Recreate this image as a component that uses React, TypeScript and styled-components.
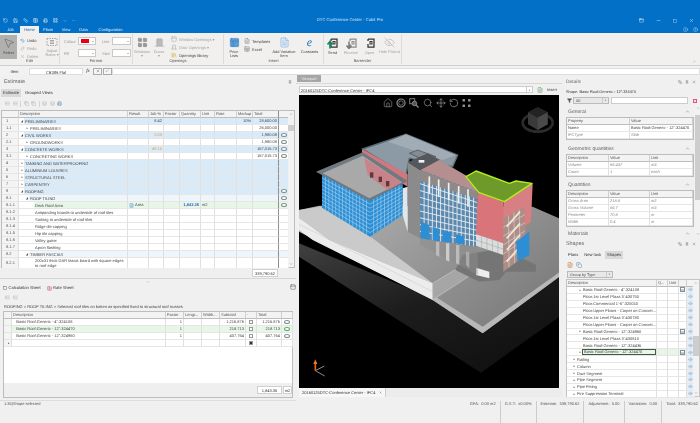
import React from 'react';
import styled, { createGlobalStyle } from 'styled-components';
import {
  Undo2, Redo2, X, Check, Home, Search, Move, RotateCcw, Pin, Minus, Square, Info, HelpCircle, Filter, Eye, EyeOff,
  Save, Printer, Ruler, Table, ChevronUp, ChevronDown, LayoutGrid, FileText, Sheet, PanelTop, MousePointer2,
  DoorClosed, PanelsTopLeft, Library, Copy, Layers, ListTree, AppWindow, Crop
} from 'lucide-react';

const GlobalStyle = createGlobalStyle`
  html, body { margin: 0; padding: 0; background: #f0f0f0; }
  body { font-family: "Liberation Sans", "Open Sans", sans-serif; color: #333; overflow: hidden; text-rendering: geometricPrecision; }
  * { box-sizing: border-box; }
`;

const Page = styled.div`
  width: 700px;
  height: 423px;
  overflow: hidden;
  display: flex;
  flex-direction: column;
  background: #f0f0f0;
  filter: blur(0.25px);
`;

/* title bar */
const TitleBar = styled.div`
  height: 33px;
  background: #0170c6;
  color: #e8f2fb;
  padding-top: 15px;
  display: flex;
  flex-direction: column;
  flex: none;
`;
const TitleRow = styled.div`
  height: 11px;
  display: flex;
  align-items: center;
  position: relative;
  padding: 0 3px;
`;
const QuickAccess = styled.div`
  display: flex;
  align-items: center;
  gap: 5px;
  height: 8px;
`;
const AppTitle = styled.div`
  position: absolute;
  left: 0;
  right: 0;
  top: 1px;
  text-align: center;
  font-size: 4.2px;
  line-height: 8px;
  color: #cfe6f8;
`;
const WindowButtons = styled.div`
  margin-left: auto;
  display: flex;
  gap: 12px;
  align-items: center;
  padding-right: 3px;
`;
const TabRow = styled.div`
  height: 7px;
  display: flex;
  align-items: stretch;
  font-size: 4px;
  padding-left: 1px;
  position: relative;
`;
const RibbonTab = styled.div<{ $active?: boolean; $w: number }>`
  width: ${p => p.$w}px;
  text-align: center;
  line-height: 7px;
  color: ${p => (p.$active ? '#1e5f96' : '#dcecf9')};
  background: ${p => (p.$active ? '#f1f0ef' : 'transparent')};
`;
const HelpIcons = styled.div`
  margin-left: auto;
  display: flex;
  gap: 5px;
  align-items: center;
  padding-right: 2px;
  opacity: 0.8;
`;

/* ribbon */
const Ribbon = styled.div`
  height: 33px;
  flex: none;
  display: flex;
  background: #f1f0ef;
  border-bottom: 1px solid #cfcfcf;
  position: relative;
`;
const RibbonGroup = styled.div<{ $w: number }>`
  width: ${p => p.$w}px;
  flex: none;
  display: flex;
  flex-direction: column;
  border-right: 1px solid #dcdcdc;
  margin: 1px 0;
`;
const GroupBody = styled.div`
  flex: 1;
  display: flex;
  align-items: flex-start;
  padding-top: 1px;
  min-height: 0;
`;
const GroupLabel = styled.div`
  height: 7px;
  font-size: 4px;
  line-height: 7px;
  text-align: center;
  color: #555;
`;
const BigButton = styled.div<{ $w: number; $on?: boolean; $dim?: boolean }>`
  width: ${p => p.$w}px;
  flex: none;
  height: 24px;
  display: flex;
  flex-direction: column;
  align-items: center;
  gap: 2px;
  padding-top: 2px;
  font-size: 3.9px;
  line-height: 4.4px;
  text-align: center;
  background: ${p => (p.$on ? '#b0b0ae' : 'transparent')};
  color: ${p => (p.$dim ? '#a0a0a0' : '#444')};
`;
const SmallStack = styled.div<{ $w: number; $ml?: number; $pt?: number }>`
  width: ${p => p.$w}px;
  margin-left: ${p => p.$ml ?? 0}px;
  padding-top: ${p => p.$pt ?? 2}px;
  flex: none;
  display: flex;
  flex-direction: column;
  gap: 2px;
`;
const SmallButton = styled.div<{ $dim?: boolean }>`
  height: 6px;
  display: flex;
  align-items: center;
  gap: 2px;
  font-size: 4px;
  white-space: nowrap;
  color: ${p => (p.$dim ? '#a4a4a4' : '#444')};
`;
const FormatRow = styled.div`
  height: 8px;
  display: flex;
  align-items: center;
  font-size: 4px;
  color: #999;
  margin-bottom: 2px;
`;
const FormatLabel = styled.span<{ $w: number }>`
  width: ${p => p.$w}px;
  flex: none;
`;
const Swatch = styled.div<{ $w?: number }>`
  width: ${p => p.$w ?? 18}px;
  height: 8px;
  background: #fff;
  border: 1px solid #c8c8c8;
  display: flex;
  align-items: center;
  padding: 1px 6px 1px 2px;
  position: relative;
  &::after {
    content: '';
    position: absolute;
    right: 1.5px;
    top: 2.5px;
    border: 1.2px solid transparent;
    border-top-color: #888;
  }
`;
const ColourChip = styled.div`
  width: 8px;
  height: 3.5px;
  background: #e8000f;
`;
const CollapseMark = styled.div`
  position: absolute;
  right: 3px;
  bottom: 1px;
  color: #999;
  display: flex;
`;
const BigE = styled.span`
  font-family: "Liberation Serif", serif;
  font-style: italic;
  font-size: 12px;
  line-height: 11px;
  height: 11px;
  color: #1c72b8;
`;

/* formula bar */
const FormulaBar = styled.div`
  height: 9px;
  flex: none;
  display: flex;
  align-items: center;
  font-size: 4.1px;
  background: #f2f2f2;
  padding-top: 1px;
`;
const ItemLabel = styled.div`
  width: 29px;
  text-align: center;
  flex: none;
`;
const FieldBox = styled.div<{ $w?: number; $center?: boolean }>`
  ${p => (p.$w ? `width:${p.$w}px;flex:none;` : 'flex:1;')}
  height: 7px;
  line-height: 7px;
  background: #fff;
  text-align: ${p => (p.$center ? 'center' : 'left')};
  border: 0.5px solid #ddd;
`;
const FxBox = styled.div`
  width: 10px;
  flex: none;
  text-align: center;
  font-family: "Liberation Serif", serif;
  font-style: italic;
  font-size: 5px;
`;
const MiniButton = styled.div`
  width: 9px;
  height: 7px;
  flex: none;
  display: flex;
  align-items: center;
  justify-content: center;
  border: 0.5px solid #aaa;
  background: #f7f7f7;
  margin-right: 0.5px;
`;

/* main columns */
const Main = styled.div`
  height: 323px;
  flex: none;
  display: grid;
  grid-template-columns: 296px 266px 138px;
`;
const Column = styled.div`
  display: flex;
  flex-direction: column;
  min-width: 0;
  min-height: 0;
`;
const PanelTitle = styled.div<{ $h: number; $size?: number }>`
  height: ${p => p.$h}px;
  flex: none;
  display: flex;
  align-items: center;
  font-size: ${p => p.$size ?? 5.4}px;
  color: #666;
  padding: 0 4px;
`;
const TitleTools = styled.div`
  margin-left: auto;
  display: flex;
  gap: 3px;
  color: #555;
`;
const SubTabs = styled.div<{ $pl?: number }>`
  height: 8px;
  flex: none;
  display: flex;
  font-size: 4.1px;
  padding-left: ${p => p.$pl ?? 1}px;
`;
const SubTab = styled.div<{ $active?: boolean }>`
  padding: 0 2px;
  margin-right: 2px;
  line-height: 8px;
  display: flex;
  align-items: center;
  gap: 1.5px;
  background: ${p => (p.$active ? '#d9d9d9' : 'transparent')};
`;
const ToolRow = styled.div<{ $h: number }>`
  height: ${p => p.$h}px;
  flex: none;
  display: flex;
  align-items: center;
  gap: 2.5px;
  padding-left: 5px;
  color: #a9a9a9;
`;
const ToolSep = styled.div`
  width: 1px;
  height: 6px;
  background: #d4d4d4;
`;
const TableWrap = styled.div<{ $h: number; $mx?: number }>`
  height: ${p => p.$h}px;
  flex: none;
  display: flex;
  margin: 0 ${p => p.$mx ?? 1}px;
  border: 0.5px solid #bdbdbd;
  background: #fff;
`;
const TableBody = styled.div`
  flex: 1;
  min-width: 0;
  display: flex;
  flex-direction: column;
`;
const Row = styled.div<{ $cols: string; $h?: number; $bg?: string }>`
  display: grid;
  grid-template-columns: ${p => p.$cols};
  height: ${p => p.$h ?? 7}px;
  flex: none;
  background: ${p => p.$bg ?? '#fff'};
`;
const Cell = styled.div<{ $right?: boolean; $bg?: string; $color?: string; $bold?: boolean; $heavy?: boolean; $italic?: boolean }>`
  font-size: 4px;
  line-height: 6.5px;
  padding: 0 1px;
  display: flex;
  align-items: center;
  justify-content: ${p => (p.$right ? 'flex-end' : 'flex-start')};
  white-space: nowrap;
  overflow: hidden;
  min-width: 0;
  color: ${p => p.$color ?? '#444'};
  font-weight: ${p => (p.$bold ? 700 : 400)};
  font-style: ${p => (p.$italic ? 'italic' : 'normal')};
  background: ${p => p.$bg ?? 'transparent'};
  border-right: ${p => (p.$heavy ? '1px solid #8e8e8e' : '0.5px solid #e0e0e0')};
  border-bottom: 0.5px solid #e6e6e6;
`;
const HeadCell = styled(Cell)`
  background: #f3f3f3;
  color: #555;
  border-right: ${p => (p.$heavy ? '1px solid #8e8e8e' : '0.5px solid #cfcfcf')};
  border-bottom: 0.5px solid #bdbdbd;
`;
const GutterCell = styled(Cell)`
  background: #f4f4f4;
  color: #555;
  justify-content: flex-start;
  padding-left: 4px;
`;
const DescCell = styled(Cell)`
  padding: 0;
  white-space: normal;
`;
const DescPad = styled.div<{ $w: number }>`
  width: ${p => p.$w}px;
  flex: none;
  height: 100%;
  display: flex;
  align-items: center;
  justify-content: flex-end;
  background: #fff;
  padding-right: 1px;
`;
const DescText = styled.div<{ $bg?: string }>`
  flex: 1;
  height: 100%;
  padding-left: 1px;
  display: flex;
  align-items: center;
  white-space: pre;
  line-height: 5px;
  min-width: 0;
  background: ${p => p.$bg ?? 'transparent'};
`;
const Caret = styled.span`
  font-family: "DejaVu Sans", sans-serif;
  font-size: 3px;
  color: #555;
`;
const Oval = styled.div<{ $green?: boolean }>`
  width: 6px;
  height: 4px;
  border-radius: 50%;
  border: 0.5px solid ${p => (p.$green ? '#5aaa68' : '#7f9090')};
  background: #fff;
  margin: 0 auto;
`;
const Rail = styled.div<{ $w?: number }>`
  width: ${p => p.$w ?? 6}px;
  flex: none;
  background: #f2f2f2;
  display: flex;
  flex-direction: column;
  align-items: center;
  justify-content: space-between;
  color: #777;
  position: relative;
  padding: 1px 0;
`;
const Thumb = styled.div<{ $top: number; $h: number }>`
  position: absolute;
  left: 0;
  right: 0;
  top: ${p => p.$top}px;
  height: ${p => p.$h}px;
  background: #cdcdcd;
`;
const TotalRow = styled.div<{ $h: number }>`
  height: ${p => p.$h}px;
  flex: none;
  display: flex;
  align-items: center;
  background: #efefef;
  font-size: 4px;
`;
const TotalBox = styled.div<{ $w: number; $ml?: number }>`
  width: ${p => p.$w}px;
  height: 8px;
  line-height: 8px;
  flex: none;
  margin-left: ${p => p.$ml ?? 0}px;
  background: #fff;
  border: 0.5px solid #d0d0d0;
  text-align: center;
`;
const Splitter = styled.div`
  height: 6px;
  flex: none;
  display: flex;
  align-items: center;
  justify-content: center;
  border-top: 1px solid #d6d6d6;
  color: #888;
`;
const Crumb = styled.div`
  height: 8px;
  flex: none;
  padding-left: 4px;
  font-size: 4px;
  line-height: 8px;
  white-space: nowrap;
  overflow: hidden;
  color: #444;
`;
const CheckBoxMark = styled.div<{ $filled?: boolean }>`
  width: 4px;
  height: 4px;
  margin: 0 auto;
  border: 0.5px solid #999;
  background: ${p => (p.$filled ? 'radial-gradient(#333 60%, #fff 62%)' : '#fff')};
`;
const EmptyFill = styled.div`
  flex: 1;
  background: #fff;
`;
const BottomEdge = styled.div`
  height: 1px;
  flex: none;
  background: #ddd;
  margin-top: 2px;
`;

/* viewport */
const ViewTab = styled.div`
  width: 24px;
  height: 7px;
  flex: none;
  margin-left: 1px;
  background: #a6a6a6;
  color: #eee;
  font-size: 3.9px;
  line-height: 7px;
  text-align: center;
`;
const AddressRow = styled.div`
  height: 12px;
  flex: none;
  margin-top: 1px;
  display: flex;
  align-items: center;
  padding: 0 3px;
  border-top: 1px solid #d8d8d8;
  font-size: 4px;
`;
const AddressField = styled.div`
  flex: 1;
  height: 7px;
  line-height: 7px;
  padding-left: 1px;
  background: #fff;
  border: 0.5px solid #ccc;
  display: flex;
  justify-content: space-between;
`;
const DropMark = styled.span`
  width: 6px;
  border-left: 0.5px solid #ccc;
  font-size: 2.6px;
  text-align: center;
  color: #666;
`;
const InsertButton = styled.div`
  width: 26px;
  flex: none;
  display: flex;
  align-items: center;
  justify-content: flex-end;
  gap: 4px;
  padding-right: 2px;
  color: #444;
`;
const Canvas = styled.div`
  width: 260px;
  height: 293px;
  flex: none;
  margin-left: 3px;
  background: #000;
  position: relative;
  overflow: hidden;
`;
const Scene = styled.svg`
  display: block;
  width: 100%;
  height: 100%;
`;
const NavIcons = styled.div`
  position: absolute;
  left: 84px;
  top: 3px;
  display: flex;
  gap: 3.2px;
  color: #8e8e8e;
`;
const FileTabRow = styled.div`
  height: 9px;
  flex: none;
  margin-left: 3px;
  display: flex;
  font-size: 4px;
  background: #ececec;
`;
const FileTab = styled.div`
  width: 87px;
  background: #f7f7f7;
  border-right: 0.5px solid #ccc;
  line-height: 8px;
  padding-left: 3px;
  display: flex;
  align-items: center;
  gap: 4px;
`;

/* right side */
const ShapeLine = styled.div`
  height: 7px;
  flex: none;
  font-size: 3.9px;
  line-height: 6px;
  padding-left: 4px;
  white-space: nowrap;
`;
const FilterRow = styled.div`
  height: 9px;
  flex: none;
  display: flex;
  align-items: center;
  padding-left: 5px;
  gap: 1px;
  color: #555;
`;
const ComboBox = styled.div<{ $w: number }>`
  width: ${p => p.$w}px;
  flex: none;
  height: 7px;
  line-height: 6.5px;
  padding-left: 2px;
  font-size: 3.9px;
  background: #e8e8e8;
  border: 0.5px solid #bbb;
  display: flex;
  justify-content: space-between;
`;
const WhiteBox = styled.div`
  width: 77px;
  flex: none;
  height: 7px;
  background: #fff;
  border: 0.5px solid #ccc;
  margin-left: 1px;
`;
const PinkBox = styled.div`
  width: 4px;
  height: 4px;
  margin-left: 4px;
  border: 0.7px solid #e0567b;
  background: #f9dbe3;
`;
const DetailsBody = styled.div`
  height: 132px;
  flex: none;
  overflow: hidden;
  display: flex;
`;
const DetailsScroll = styled.div`
  flex: 1;
  min-width: 0;
  padding: 0 1px 0 4px;
`;
const SectionHead = styled.div<{ $mt?: number }>`
  height: 9px;
  margin-top: ${p => p.$mt ?? 0}px;
  display: flex;
  align-items: center;
  justify-content: space-between;
  font-size: 5px;
  color: #666;
  padding: 0 4px 0 2px;
`;
const DetailTable = styled.div`
  border: 0.5px solid #bcbcbc;
  margin: 1px 0;
`;
const ShapesTree = styled.div`
  flex: none;
  height: 118px;
  margin-left: 4px;
  display: flex;
  border: 0.5px solid #c4c4c4;
  background: #fff;
`;
const Blue = styled.span`
  color: #6ea6d8;
  display: flex;
  margin: 0 auto;
`;
const Ellipsis = styled.div`
  width: 7px;
  height: 5px;
  font-size: 3px;
  line-height: 4px;
  text-align: center;
  border: 0.5px solid #7e8fa0;
  background: #fff;
  color: #333;
`;
const Selected = styled.div`
  flex: 1;
  height: 100%;
  display: flex;
  align-items: center;
  border: 0.8px solid #3f5a44;
  padding-left: 1px;
`;

/* status */
const StatusBar = styled.div`
  flex: 1;
  display: flex;
  justify-content: space-between;
  padding: 3px 2px 0 4px;
  font-size: 4px;
  line-height: 6px;
  color: #555;
`;
const StatusRight = styled.div`
  display: flex;
  gap: 4px;
`;
const StatusItem = styled.div`
  padding-right: 4px;
  border-right: 0.5px solid #ccc;
  white-space: pre;
  &:last-child { border-right: 0; padding-right: 0; }
`;

const Bartender = ({ arrow, dim, colour }: { arrow?: 'up' | 'down'; dim?: boolean; colour?: string }) => (
  <svg width="13" height="12" viewBox="0 0 26 24" fill="none">
    <path d="M10 4 H22 V20 H10 V14 M10 4 V8" stroke={dim ? '#8a8a8a' : '#333'} strokeWidth="2.5" />
    <rect x="14" y="9" width="4" height="5" stroke={dim ? '#8a8a8a' : '#333'} strokeWidth="2" />
    {arrow === 'up' && <path d="M8 23 V11 M3 15 L8 9 L13 15" stroke={colour} strokeWidth="3.5" />}
    {arrow === 'down' && <path d="M8 9 V21 M3 17 L8 23 L13 17" stroke={colour} strokeWidth="3" />}
  </svg>
);

const AdjustIcon = () => (
  <svg width="12" height="10" viewBox="0 0 24 20" fill="none" stroke="#888" strokeWidth="1.4">
    <rect x="2" y="3" width="20" height="14" strokeDasharray="3 2" />
    <path d="M8 7 h8 M8 10 h8 M8 13 h8" />
  </svg>
);

const OrbitIcon = () => (
  <svg width="10" height="10" viewBox="0 0 20 20" fill="none" stroke="currentColor">
    <circle cx="10" cy="10" r="8" strokeWidth="2.4" />
    <circle cx="10" cy="10" r="4.5" strokeWidth="1.4" />
  </svg>
);

const ZoomWindowIcon = () => (
  <svg width="10" height="10" viewBox="0 0 20 20" fill="none" stroke="currentColor" strokeWidth="1.8">
    <rect x="1.5" y="1.5" width="10" height="10" />
    <circle cx="11" cy="11" r="4.5" fill="#555" />
    <path d="M14.5 14.5 L19 19" strokeWidth="2.4" />
  </svg>
);

const FourDots = () => (
  <svg width="9" height="10" viewBox="0 0 18 20" fill="currentColor">
    <rect x="1" y="2" width="5" height="5" rx="1" />
    <rect x="12" y="2" width="5" height="5" rx="1" />
    <rect x="1" y="13" width="5" height="5" rx="1" />
    <rect x="12" y="13" width="5" height="5" rx="1" />
  </svg>
);

const EST_COLS = '17px 109px 21px 15px 16px 21px 14px 22px 16px 26px 10px';
const TINT = '#d9ebf9';
const TINT2 = '#eef6fc';
const GREEN = '#e8f6e8';

interface EstRow {
  no: string;
  level: number;
  caret?: string;
  desc: string;
  job?: string;
  jobHot?: boolean;
  markup?: string;
  total?: string;
  oval?: boolean;
  result?: boolean;
  qty?: string;
  unit?: string;
  tint?: string;
  h?: number;
}

const estimateRows: EstRow[] = [
  { no: '1', level: 0, caret: '◢', desc: 'PRELIMINARIES', job: '8.42', markup: '10%', total: '28,600.00', tint: TINT },
  { no: '1.1', level: 1, caret: '▸', desc: 'PRELIMINARIES', total: '26,000.00' },
  { no: '2', level: 0, caret: '◢', desc: 'CIVIL WORKS', job: '0.58', jobHot: true, total: '1,980.08', oval: true, tint: TINT },
  { no: '2.1', level: 1, caret: '▸', desc: 'GROUNDWORKS', total: '1,980.08', oval: true },
  { no: '3', level: 0, caret: '◢', desc: 'CONCRETE WORKS', job: '49.15', jobHot: true, total: '167,015.73', oval: true, tint: TINT },
  { no: '3.1', level: 1, caret: '▸', desc: 'CONCRETING WORKS', total: '167,015.73', oval: true },
  { no: '4', level: 0, caret: '▸', desc: 'TANKING AND WATERPROOFING', tint: TINT },
  { no: '5', level: 0, caret: '▸', desc: 'ALUMINIUM LOUVRES', tint: TINT },
  { no: '6', level: 0, caret: '▸', desc: 'STRUCTURAL STEEL', tint: TINT },
  { no: '7', level: 0, caret: '▸', desc: 'CARPENTRY', tint: TINT },
  { no: '8', level: 0, caret: '◢', desc: 'ROOFING', oval: true, tint: TINT },
  { no: '8.1', level: 1, caret: '◢', desc: 'ROOF TILING', oval: true, tint: TINT2 },
  { no: '8.1.1', level: 2, desc: 'Deck Roof Area', result: true, qty: '1,843.35', unit: 'm2', oval: true, tint: GREEN },
  { no: '8.1.2', level: 2, desc: 'Antiponding boards to underside of roof tiles' },
  { no: '8.1.3', level: 2, desc: 'Sarking to underside of roof tiles' },
  { no: '8.1.4', level: 2, desc: 'Ridge tile capping' },
  { no: '8.1.5', level: 2, desc: 'Hip tile capping' },
  { no: '8.1.6', level: 2, desc: 'Valley gutter' },
  { no: '8.1.7', level: 2, desc: 'Apron flashing' },
  { no: '8.2', level: 1, caret: '◢', desc: 'TIMBER FASCIAS', tint: TINT2 },
  { no: '8.2.1', level: 2, desc: '200x31 thick DAR fascia board with square edges\nto roof edge', h: 11 }
];

const EST_PAD = [5, 10, 15];

const CALC_COLS = '8px 154px 18px 18px 18px 26px 11px 25px 11px';
const calcRows = [
  { desc: 'Basic Roof:Generic - 4":324108', sub: '1,216.876', total: '1,216.876' },
  { desc: 'Basic Roof:Generic - 12":324470', sub: '218.713', total: '218.713', tint: GREEN },
  { desc: 'Basic Roof:Generic - 12":324960', sub: '407.764', total: '407.764' }
];

const TREE_COLS = '90px 11px 11px 8px 8px';
const TREE_ROW = 6.93;
const TREE_PAD = [0, 9, 15, 15];
const treeRows = [
  { depth: 2, caret: true, text: 'Basic Roof:Generic - 4":324108', more: true },
  { depth: 3, text: "Floor:1st Level Plaza 3':430750" },
  { depth: 3, text: 'Floor:Commercial 1\'-6":325010' },
  { depth: 3, text: 'Floor:Upper Floors - Carpet on Concret...' },
  { depth: 3, text: "Floor:1st Level Plaza 3':430780" },
  { depth: 3, text: 'Floor:Upper Floors - Carpet on Concret...' },
  { depth: 2, caret: true, text: 'Basic Roof:Generic - 12":324960', more: true },
  { depth: 3, text: "Floor:1st Level Plaza 3':430810" },
  { depth: 3, text: 'Basic Roof:Generic - 12":324436' },
  { depth: 2, caret: true, text: 'Basic Roof:Generic - 12":324470', more: true, sel: true },
  { depth: 1, caret: true, text: 'Railing' },
  { depth: 1, caret: true, text: 'Column' },
  { depth: 1, caret: true, text: 'Duct Segment' },
  { depth: 1, caret: true, text: 'Pipe Segment' },
  { depth: 1, caret: true, text: 'Pipe Fitting' },
  { depth: 1, caret: true, text: 'Fire Suppression Terminal' }
];

// grid lines across a quad, corners clockwise from top-left
type P = [number, number];
const mix = (a: P, b: P, t: number): P => [a[0] + (b[0] - a[0]) * t, a[1] + (b[1] - a[1]) * t];
const pts = (...list: P[]) => list.map(p => p.join(',')).join(' ');

const Face = ({ q, nx, ny, fill, line, w = 1 }: { q: [P, P, P, P]; nx: number; ny: number; fill: string; line: string; w?: number }) => {
  const [a, b, c, d] = q;
  const lines: [P, P][] = [];
  for (let i = 1; i < nx; i++) lines.push([mix(a, b, i / nx), mix(d, c, i / nx)]);
  for (let i = 1; i < ny; i++) lines.push([mix(a, d, i / ny), mix(b, c, i / ny)]);
  return (
    <g>
      <polygon points={pts(a, b, c, d)} fill={fill} />
      {lines.map((l, i) => (
        <line key={i} x1={l[0][0]} y1={l[0][1]} x2={l[1][0]} y2={l[1][1]} stroke={line} strokeWidth={w} />
      ))}
    </g>
  );
};

const Building = () => (
  <Scene viewBox="9 60 780 879">
    <defs>
      <linearGradient id="base" x1="0" y1="0" x2="0.8" y2="1">
        <stop offset="0" stopColor="#404040" />
        <stop offset="0.5" stopColor="#1d1d1d" />
        <stop offset="1" stopColor="#101010" />
      </linearGradient>
      <linearGradient id="plane" x1="0" y1="0" x2="1" y2="0.6">
        <stop offset="0" stopColor="#b4b4b4" />
        <stop offset="1" stopColor="#7e7e7e" />
      </linearGradient>
    </defs>
    {/* ground slab */}
    <polygon points="9,505 9,545 555,893 790,725 790,600 410,670" fill="url(#base)" />
    <polygon points="9,405 70,392 710,395 790,430 790,605 560,775 410,675 9,470" fill="url(#plane)" />
    <polygon points="410,675 560,775 790,605 790,592 560,755 410,660" fill="#b8b8b8" />
    <polygon points="9,405 75,395 230,490 410,625 100,495 25,440 9,430" fill="#cacaca" />
    <polygon points="9,430 25,440 100,495 410,625 410,675 50,495 9,465" fill="#ececec" />
    <line x1="9" y1="448" x2="410" y2="650" stroke="#c8c8c8" strokeWidth="1.5" />
    <polygon points="410,625 410,675 540,590 475,585" fill="#a6a6a6" stroke="#d4d4d4" strokeWidth="1.5" />
    <polygon points="478,585 550,620 610,615 630,590 720,590 720,570 620,520 500,540" fill="#757575" />
    <polygon points="540,578 580,590 580,610 540,600" fill="#eee" />
    {/* rear block */}
    <polygon points="200,222 330,178 485,240 470,275 340,250 330,300" fill="#8c9aa5" stroke="#5b6a75" strokeWidth="4" />
    <polygon points="275,200 330,178 480,240 440,255" fill="#a1acb6" />
    <polygon points="198,222 335,298 335,335 198,255" fill="#d0787e" />
    <polygon points="340,235 365,225 420,245 400,262" fill="#848c92" stroke="#444" strokeWidth="2" />
    {/* left wing */}
    <Face q={[[78, 298], [222, 375], [222, 485], [78, 398]]} nx={14} ny={9} fill="#2d8ed4" line="#b4dcf5" w={1.6} />
    <Face q={[[222, 375], [320, 325], [320, 420], [222, 485]]} nx={9} ny={9} fill="#2d8ed4" line="#b4dcf5" w={1.6} />
    <polygon points="60,290 200,232 335,318 220,378" fill="#6f7980" />
    <polygon points="80,295 200,242 318,322 220,370" fill="#a9a9a9" />
    <polygon points="205,250 318,322 275,345 215,300" fill="#c88288" />
    <rect x="222" y="292" width="10" height="16" fill="#5a3a40" />
    <rect x="248" y="305" width="10" height="16" fill="#5a3a40" />
    <rect x="270" y="318" width="10" height="16" fill="#5a3a40" />
    {/* core */}
    <polygon points="335,262 395,235 432,255 372,285" fill="#54585c" />
    <polygon points="335,262 372,285 372,490 335,470" fill="#8b8b8b" />
    <polygon points="320,340 335,335 335,470 320,420" fill="#dfe6ec" />
    <polygon points="368,255 385,255 385,263 368,263" fill="#f2f2f2" />
    <polygon points="430,255 545,322 545,352 372,285" fill="#b58e90" />
    {/* main facade */}
    <Face q={[[372, 285], [545, 350], [545, 516], [372, 490]]} nx={14} ny={10} fill="#5b88ad" line="#eef0f2" w={2.6} />
    <polygon points="372,285 545,350 545,372 372,318" fill="#8f8a88" />
    <polygon points="375,440 400,450 400,495 375,490" fill="#2d8ed4" />
    <polygon points="410,455 430,462 430,500 410,496" fill="#2d8ed4" />
    <polygon points="440,466 465,472 465,503 440,500" fill="#2d8ed4" />
    <polygon points="480,478 505,485 505,508 480,505" fill="#2d8ed4" />
    {[400, 428, 458, 488, 516].map(x => (
      <line key={x} x1={x} y1={295 + (x - 372) * 0.33} x2={x} y2={345 + (x - 372) * 0.35} stroke="#f1f1f1" strokeWidth="5" />
    ))}
    <polygon points="372,490 545,516 545,600 480,565 372,510" fill="#8b8b8b" opacity="0.5" />
    <polygon points="420,500 430,500 430,545 420,540" fill="#bbb" />
    <polygon points="450,505 460,505 460,560 450,555" fill="#ccc" />
    <polygon points="480,510 490,510 490,570 480,565" fill="#bbb" />
    <polygon points="510,530 520,530 520,580 510,570" fill="#aaa" />
    {/* right block */}
    <polygon points="545,350 622,380 622,505 540,478" fill="#d8747a" />
    <Face q={[[540, 478], [622, 505], [622, 540], [540, 512]]} nx={5} ny={2} fill="#dcdcdc" line="#788" />
    <polygon points="622,380 710,325 705,440 622,500" fill="#d77f82" />
    <Face q={[[622, 430], [685, 395], [690, 540], [622, 590]]} nx={4} ny={6} fill="#ad8d86" line="#eee" w={1.4} />
    {[0, 1, 2, 3].map(i => (
      <path key={i} d={`M632 ${455 + i * 35} L672 ${410 + i * 35}`} stroke="#f2e8d8" strokeWidth="5" />
    ))}
    <polygon points="660,500 700,470 700,540 665,560" fill="#2d8ed4" />
    <polygon points="510,305 540,288 640,325 660,318 708,325 625,380 548,352" fill="#6e9a2a" stroke="#b4ee1e" strokeWidth="4" strokeLinejoin="round" />
    {/* viewcube */}
    <ellipse cx="725" cy="143" rx="45" ry="27" fill="none" stroke="#2c2c2c" strokeWidth="8" />
    <polygon points="725,97 755,112 755,148 725,165 696,148 696,112" fill="#3a3a3a" />
    <polygon points="725,97 755,112 725,128 696,112" fill="#232323" />
    <polygon points="725,128 755,112 755,148 725,165" fill="#4a4a4a" />
    {/* axes */}
    <path d="M58 392 L85 378 M58 392 L86 408" stroke="#8c8c8c" strokeWidth="3" transform="translate(0 495)" />
    <path d="M58 392 V370" stroke="#f0620f" strokeWidth="5" transform="translate(0 495)" />
    <polygon points="52,372 64,372 58,358" fill="#ef7a2a" transform="translate(0 495)" />
  </Scene>
);

const App: React.FC = () => (
  <Page>
    <GlobalStyle />
    <TitleBar>
      <TitleRow>
        <QuickAccess>
          <RotateCcw size={5} />
          <Save size={5} />
          <Ruler size={5} />
          <Table size={5} />
          <Printer size={5} />
          <LayoutGrid size={5} />
          <ChevronDown size={4} />
          <Minus size={3} />
        </QuickAccess>
        <AppTitle>DTC Conference Center - Cubit Pro</AppTitle>
        <WindowButtons>
          <AppWindow size={5} />
          <Minus size={5} />
          <Square size={4} />
          <X size={5} />
        </WindowButtons>
      </TitleRow>
      <TabRow>
        <RibbonTab $w={19}>Job</RibbonTab>
        <RibbonTab $w={19} $active>Home</RibbonTab>
        <RibbonTab $w={18}>Plans</RibbonTab>
        <RibbonTab $w={18}>View</RibbonTab>
        <RibbonTab $w={17}>Data</RibbonTab>
        <RibbonTab $w={37}>Configuration</RibbonTab>
        <HelpIcons>
          <Info size={5} />
          <HelpCircle size={5} />
        </HelpIcons>
      </TabRow>
    </TitleBar>

    <Ribbon>
      <RibbonGroup $w={60}>
        <GroupBody>
          <BigButton $w={17} $on>
            <MousePointer2 size={12} strokeWidth={1} color="#555" />
            Select
          </BigButton>
          <SmallStack $w={24} $ml={3}>
            <SmallButton><Undo2 size={5} color="#3c78b4" />Undo</SmallButton>
            <SmallButton $dim><Redo2 size={5} />Redo</SmallButton>
            <SmallButton $dim><X size={5} />Delete</SmallButton>
          </SmallStack>
          <BigButton $w={16} $dim>
            <AdjustIcon />
            Adjust<br />Rates ▾
          </BigButton>
        </GroupBody>
        <GroupLabel>Edit</GroupLabel>
      </RibbonGroup>
      <RibbonGroup $w={73}>
        <GroupBody>
          <SmallStack $w={38} $ml={4}>
            <FormatRow>
              <FormatLabel $w={14}>Colour</FormatLabel>
              <Swatch><ColourChip /></Swatch>
            </FormatRow>
            <FormatRow>
              <FormatLabel $w={14}>Fill</FormatLabel>
              <Swatch />
            </FormatRow>
          </SmallStack>
          <SmallStack $w={30}>
            <FormatRow>
              <FormatLabel $w={10}>Line</FormatLabel>
              <Swatch $w={19} />
            </FormatRow>
            <FormatRow>
              <FormatLabel $w={10}>Size</FormatLabel>
              <Swatch $w={19} />
            </FormatRow>
          </SmallStack>
        </GroupBody>
        <GroupLabel>Format</GroupLabel>
      </RibbonGroup>
      <RibbonGroup $w={91}>
        <GroupBody>
          <BigButton $w={18} $dim>
            <LayoutGrid size={11} color="#777" fill="#999" strokeWidth={1} />
            Windows<br />▾
          </BigButton>
          <BigButton $w={16} $dim>
            <DoorClosed size={11} color="#999" fill="#bbb" strokeWidth={1} />
            Doors<br />▾
          </BigButton>
          <SmallStack $w={50} $ml={4} $pt={1}>
            <SmallButton $dim><PanelTop size={6} />Window Openings ▾</SmallButton>
            <SmallButton $dim><DoorClosed size={6} />Door Openings ▾</SmallButton>
            <SmallButton><Library size={6} color="#d9a21f" />Openings library</SmallButton>
          </SmallStack>
        </GroupBody>
        <GroupLabel>Openings</GroupLabel>
      </RibbonGroup>
      <RibbonGroup $w={100}>
        <GroupBody>
          <BigButton $w={20}>
            <PanelsTopLeft size={11} color="#2a75b8" fill="#5a9bd5" strokeWidth={1} />
            Price<br />Lists
          </BigButton>
          <SmallStack $w={27} $pt={3}>
            <SmallButton><FileText size={6} color="#888" />Templates</SmallButton>
            <SmallButton><Sheet size={6} color="#888" />Excel</SmallButton>
          </SmallStack>
          <BigButton $w={26}>
            <FileText size={11} color="#6a9ccf" fill="#dceaf7" strokeWidth={1} />
            Add Variation<br />Item
          </BigButton>
          <BigButton $w={25}>
            <BigE>e</BigE>
            Constants
          </BigButton>
        </GroupBody>
        <GroupLabel>Insert</GroupLabel>
      </RibbonGroup>
      <RibbonGroup $w={78}>
        <GroupBody>
          <BigButton $w={17}>
            <Bartender arrow="up" colour="#108a6c" />
            Send
          </BigButton>
          <BigButton $w={20} $dim>
            <Bartender arrow="down" dim colour="#777" />
            Receive
          </BigButton>
          <BigButton $w={17} $dim>
            <Bartender />
            Open
          </BigButton>
          <BigButton $w={23} $dim>
            <EyeOff size={11} strokeWidth={1} color="#999" />
            Hide Picked
          </BigButton>
        </GroupBody>
        <GroupLabel>Bartender</GroupLabel>
      </RibbonGroup>
      <CollapseMark><ChevronUp size={5} /></CollapseMark>
    </Ribbon>

    <FormulaBar>
      <ItemLabel>Item</ItemLabel>
      <FieldBox $w={54} $center>CB389.Flat</FieldBox>
      <FxBox>fx</FxBox>
      <MiniButton><X size={4} /></MiniButton>
      <MiniButton><Check size={4} /></MiniButton>
      <FieldBox />
    </FormulaBar>

    <Main>
      <Column>
        <PanelTitle $h={14}>
          Estimate
          <TitleTools><Pin size={4} /></TitleTools>
        </PanelTitle>
        <SubTabs>
          <SubTab $active>Estimate</SubTab>
          <SubTab>Grouped Views</SubTab>
        </SubTabs>
        <ToolRow $h={13}>
          <ListTree size={5} />
          <ListTree size={5} />
          <ToolSep />
          <Copy size={5} />
          <Copy size={5} />
          <ToolSep />
          <Layers size={5} />
          <Layers size={5} />
          <Printer size={5} color="#5d7fa6" />
        </ToolRow>
        <TableWrap $h={158}>
          <TableBody>
            <Row $cols={EST_COLS}>
              <HeadCell />
              <HeadCell>Description</HeadCell>
              <HeadCell>Result</HeadCell>
              <HeadCell>Job %</HeadCell>
              <HeadCell>Factor</HeadCell>
              <HeadCell>Quantity</HeadCell>
              <HeadCell>Unit</HeadCell>
              <HeadCell>Rate</HeadCell>
              <HeadCell>Markup</HeadCell>
              <HeadCell $heavy>Total</HeadCell>
              <HeadCell />
            </Row>
            {estimateRows.map(r => (
              <Row key={r.no} $cols={EST_COLS} $h={r.h} $bg="#fff">
                <GutterCell>{r.no}</GutterCell>
                <DescCell>
                  <DescPad $w={EST_PAD[r.level]}>{r.caret && <Caret>{r.caret}</Caret>}</DescPad>
                  <DescText $bg={r.tint}>{r.desc}</DescText>
                </DescCell>
                <Cell $bg={r.tint}>
                  {r.result && <FileText size={5} color="#4f94cf" />}
                  {r.result && '\u00a0Area'}
                </Cell>
                <Cell $bg={r.tint} $right $color={r.jobHot ? '#e8a04a' : undefined}>{r.job}</Cell>
                <Cell $bg={r.tint} />
                <Cell $bg={r.tint} $right $color="#2a5fc0" $bold>{r.qty}</Cell>
                <Cell $bg={r.tint}>{r.unit}</Cell>
                <Cell $bg={r.tint} />
                <Cell $bg={r.tint} $right>{r.markup}</Cell>
                <Cell $bg={r.tint} $right $heavy>{r.total}</Cell>
                <Cell $bg={r.tint}>{r.oval && <Oval />}</Cell>
              </Row>
            ))}
          </TableBody>
          <Rail>
            <ChevronUp size={4} />
            <Thumb $top={14} $h={6} />
            <ChevronDown size={4} />
          </Rail>
        </TableWrap>
        <TotalRow $h={10}>
          <TotalBox $w={26} $ml={252}>339,790.62</TotalBox>
        </TotalRow>
        <Splitter><ChevronDown size={4} /></Splitter>
        <SubTabs $pl={1}>
          <SubTab $active={false}><Square size={4} />Calculation Sheet</SubTab>
          <SubTab><Table size={5} color="#d0607e" />Rate Sheet</SubTab>
          <TitleTools><PanelTop size={6} /></TitleTools>
        </SubTabs>
        <ToolRow $h={11}>
          <ListTree size={5} />
          <ListTree size={5} />
        </ToolRow>
        <Crumb>ROOFING &gt; ROOF TILING &gt; Selected roof tiles on batten as specified fixed to structural roof trusses</Crumb>
        <TableWrap $h={87} $mx={3}>
          <TableBody>
            <Row $cols={CALC_COLS}>
              <HeadCell />
              <HeadCell>Description</HeadCell>
              <HeadCell>Factor</HeadCell>
              <HeadCell>Lengt...</HeadCell>
              <HeadCell>Width...</HeadCell>
              <HeadCell>Subtotal</HeadCell>
              <HeadCell>-</HeadCell>
              <HeadCell>Total</HeadCell>
              <HeadCell />
            </Row>
            {calcRows.map(r => (
              <Row key={r.desc} $cols={CALC_COLS} $bg={r.tint}>
                <GutterCell />
                <Cell>{'\u00a0\u00a0\u00a0'}{r.desc}</Cell>
                <Cell $right>1</Cell>
                <Cell />
                <Cell />
                <Cell $right>{r.sub}</Cell>
                <Cell><CheckBoxMark /></Cell>
                <Cell $right>{r.total}</Cell>
                <Cell><Oval $green={!!r.tint} /></Cell>
              </Row>
            ))}
            <Row $cols={CALC_COLS}>
              <GutterCell><Caret>▸</Caret></GutterCell>
              <Cell />
              <Cell />
              <Cell />
              <Cell />
              <Cell />
              <Cell><CheckBoxMark $filled /></Cell>
              <Cell />
              <Cell />
            </Row>
            <EmptyFill />
            <TotalRow $h={14}>
              <TotalBox $w={25} $ml={253}>1,843.35</TotalBox>
              <TotalBox $w={9} $ml={1}>m2</TotalBox>
            </TotalRow>
          </TableBody>
        </TableWrap>
        <BottomEdge />
      </Column>

      <Column>
        <ViewTab>Viewport</ViewTab>
        <AddressRow>
          <AddressField>
            20160125DTC-Conference Center - IFC4
            <DropMark>▾</DropMark>
          </AddressField>
          <InsertButton>
            <FileText size={6} color="#6a9a6a" />
            Insert
          </InsertButton>
        </AddressRow>
        <Canvas>
          <Building />
          <NavIcons>
            <Home size={10} strokeWidth={1.6} />
            <OrbitIcon />
            <ZoomWindowIcon />
            <Search size={10} strokeWidth={1.6} />
            <Move size={10} strokeWidth={1.8} />
            <RotateCcw size={10} strokeWidth={1.8} />
            <FourDots />
          </NavIcons>
        </Canvas>
        <FileTabRow>
          <FileTab>
            20160125DTC-Conference Center - IFC4
            <X size={3} />
          </FileTab>
        </FileTabRow>
      </Column>

      <Column>
        <PanelTitle $h={14} $size={4.9}>
          Details
          <TitleTools>
            <Crop size={4} />
            <Pin size={4} />
            <X size={4} />
          </TitleTools>
        </PanelTitle>
        <ShapeLine>Shape: Basic Roof:Generic - 12":324470</ShapeLine>
        <FilterRow>
          <Filter size={5} fill="#555" />
          <ComboBox $w={36}>All<DropMark>▾</DropMark></ComboBox>
          <WhiteBox />
          <PinkBox />
        </FilterRow>
        <DetailsBody>
          <DetailsScroll>
            <SectionHead $mt={2}>General<ChevronUp size={5} /></SectionHead>
            <DetailTable>
              <Row $cols="63px 1fr">
                <HeadCell>Property</HeadCell>
                <HeadCell>Value</HeadCell>
              </Row>
              <Row $cols="63px 1fr">
                <Cell>Name</Cell>
                <Cell>Basic Roof:Generic - 12":324470</Cell>
              </Row>
              <Row $cols="63px 1fr">
                <Cell $italic $color="#888">IFCType</Cell>
                <Cell $italic $color="#888">Slab</Cell>
              </Row>
            </DetailTable>
            <SectionHead $mt={4}>Geometric quantities<ChevronUp size={5} /></SectionHead>
            <DetailTable>
              <Row $cols="42px 41px 1fr">
                <HeadCell>Description</HeadCell>
                <HeadCell>Value</HeadCell>
                <HeadCell>Unit</HeadCell>
              </Row>
              <Row $cols="42px 41px 1fr">
                <Cell $italic $color="#888">Volume</Cell>
                <Cell $italic $color="#888">66.437</Cell>
                <Cell $italic $color="#888">m3</Cell>
              </Row>
              <Row $cols="42px 41px 1fr">
                <Cell $italic $color="#888">Count</Cell>
                <Cell $italic $color="#888">1</Cell>
                <Cell $italic $color="#888">each</Cell>
              </Row>
            </DetailTable>
            <SectionHead $mt={3}>Quantities<ChevronUp size={5} /></SectionHead>
            <DetailTable>
              <Row $cols="42px 41px 1fr">
                <HeadCell>Description</HeadCell>
                <HeadCell>Value</HeadCell>
                <HeadCell>Unit</HeadCell>
              </Row>
              {[
                ['Gross Area', '218.8', 'm2'],
                ['Gross Volume', '66.7', 'm3'],
                ['Perimeter', '70.8', 'm'],
                ['Width', '0.4', 'm']
              ].map(r => (
                <Row key={r[0]} $cols="42px 41px 1fr">
                  <Cell $italic $color="#888">{r[0]}</Cell>
                  <Cell $italic $color="#888">{r[1]}</Cell>
                  <Cell $italic $color="#888">{r[2]}</Cell>
                </Row>
              ))}
            </DetailTable>
            <SectionHead $mt={2}>Materials<ChevronUp size={5} /></SectionHead>
          </DetailsScroll>
          <Rail $w={5}>
            <ChevronUp size={4} />
            <Thumb $top={10} $h={85} />
            <ChevronDown size={4} />
          </Rail>
        </DetailsBody>

        <PanelTitle $h={14} $size={5.4}>
          Shapes
          <TitleTools>
            <Crop size={4} />
            <Pin size={4} />
            <X size={4} />
          </TitleTools>
        </PanelTitle>
        <SubTabs $pl={4}>
          <SubTab>Plans</SubTab>
          <SubTab>New task</SubTab>
          <SubTab $active>Shapes</SubTab>
        </SubTabs>
        <ToolRow $h={11}>
          <FileText size={6} color="#c47c3a" />
          <Copy size={6} color="#6d8fb0" />
        </ToolRow>
        <FilterRow>
          <ComboBox $w={46}>Group by Type<DropMark>▾</DropMark></ComboBox>
        </FilterRow>
        <ShapesTree>
          <TableBody>
            <Row $cols={TREE_COLS}>
              <HeadCell>Description</HeadCell>
              <HeadCell>Q...</HeadCell>
              <HeadCell>Unit</HeadCell>
              <HeadCell />
              <HeadCell />
            </Row>
            {treeRows.map((r, i) => (
              <Row key={i} $cols={TREE_COLS} $h={TREE_ROW} $bg={r.sel ? GREEN : '#fff'}>
                <DescCell>
                  <DescPad $w={TREE_PAD[r.depth]}>{r.caret && <Caret>▸</Caret>}</DescPad>
                  {r.sel ? <Selected>{r.text}</Selected> : <DescText>{r.text}</DescText>}
                </DescCell>
                <Cell />
                <Cell />
                <Cell>{r.more && <Ellipsis>•••</Ellipsis>}</Cell>
                <Cell $bg="#e9eff5"><Blue><Eye size={5} /></Blue></Cell>
              </Row>
            ))}
          </TableBody>
          <Rail>
            <ChevronUp size={4} />
            <Thumb $top={56} $h={20} />
            <ChevronDown size={4} />
          </Rail>
        </ShapesTree>
      </Column>
    </Main>

    <StatusBar>
      <div>1:35|Shape selected</div>
      <StatusRight>
        <StatusItem>GFA:  0.00 m2</StatusItem>
        <StatusItem>G.S.T:  ±0.00%</StatusItem>
        <StatusItem>Estimate:  339,790.62</StatusItem>
        <StatusItem>Adjustment:  0.00</StatusItem>
        <StatusItem>Variations:  0.00</StatusItem>
        <StatusItem>Total:  339,790.62</StatusItem>
      </StatusRight>
    </StatusBar>
  </Page>
);

export default App;
